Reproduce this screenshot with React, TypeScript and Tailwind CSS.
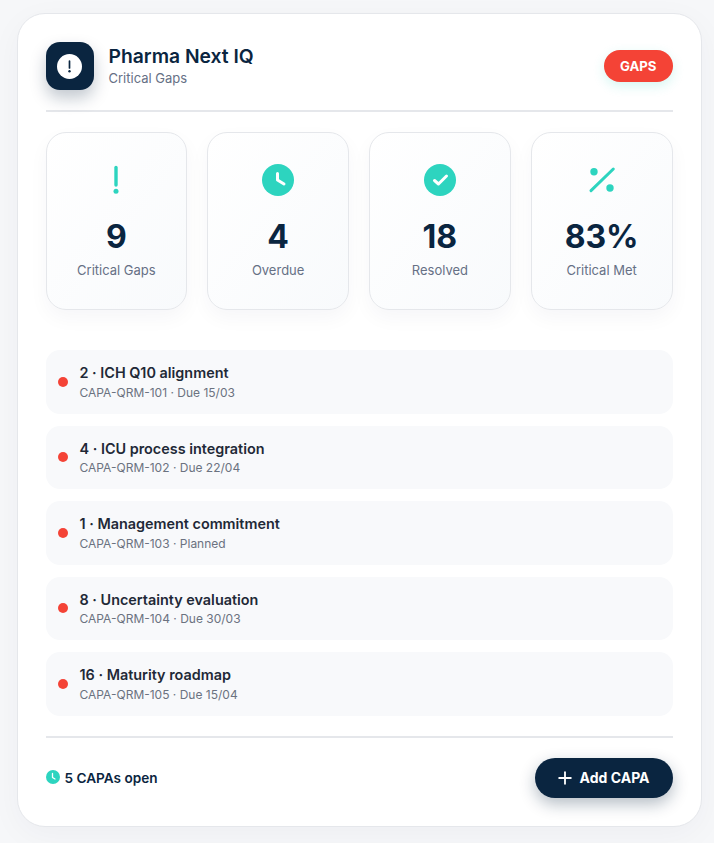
import { Plus } from "lucide-react";

const stats = [
  { icon: "alert", value: "9", label: "Critical Gaps" },
  { icon: "clock", value: "4", label: "Overdue" },
  { icon: "check", value: "18", label: "Resolved" },
  { icon: "percent", value: "83%", label: "Critical Met" },
];

const capas = [
  { title: "2 · ICH Q10 alignment", meta: "CAPA-QRM-101 · Due 15/03" },
  { title: "4 · ICU process integration", meta: "CAPA-QRM-102 · Due 22/04" },
  { title: "1 · Management commitment", meta: "CAPA-QRM-103 · Planned" },
  { title: "8 · Uncertainty evaluation", meta: "CAPA-QRM-104 · Due 30/03" },
  { title: "16 · Maturity roadmap", meta: "CAPA-QRM-105 · Due 15/04" },
];

function StatIcon({ name }: { name: string }) {
  return (
    <svg viewBox="0 0 32 32" className="h-8 w-8" fill="none">
      {name === "alert" && (
        <>
          <path d="M16 3.5V21" stroke="#2dd4bf" strokeWidth="3.4" strokeLinecap="round" />
          <circle cx="16" cy="27.3" r="2.5" fill="#2dd4bf" />
        </>
      )}
      {name === "clock" && (
        <>
          <circle cx="16" cy="16" r="16" fill="#2dd4bf" />
          <path d="M15.5 9.5V16L22 20" stroke="#fff" strokeWidth="3" strokeLinecap="round" strokeLinejoin="round" />
        </>
      )}
      {name === "check" && (
        <>
          <circle cx="16" cy="16" r="16" fill="#2dd4bf" />
          <path d="M10.5 16.5L14.5 20L22.5 12" stroke="#fff" strokeWidth="3" strokeLinecap="round" strokeLinejoin="round" />
        </>
      )}
      {name === "percent" && (
        <>
          <path d="M5 26.7L27.3 5" stroke="#2dd4bf" strokeWidth="3" strokeLinecap="round" />
          <circle cx="8" cy="7.7" r="3.7" fill="#2dd4bf" />
          <circle cx="24" cy="24" r="3.7" fill="#2dd4bf" />
        </>
      )}
    </svg>
  );
}

export default function App() {
  return (
    <div className="min-h-[843px] bg-[#f6f7f9] pl-[16.5px] pt-[13px] font-['Inter',sans-serif]">
      <div className="w-[685px] rounded-[28px] border border-[#e5e7eb] bg-white px-[28px] pt-[28px] pb-[28px] shadow-[0_8px_32px_rgba(10,37,64,0.04)]">
        {/* header */}
        <div className="flex items-center justify-between border-b-2 border-[#e5e7eb] pb-5">
          <div className="flex items-center gap-[15px]">
            <div className="flex h-12 w-12 items-center justify-center rounded-[14px] bg-[#0a2540] shadow-[0_8px_16px_rgba(10,37,64,0.25)]">
              <svg viewBox="0 0 25 25" className="h-[25px] w-[25px]">
                <circle cx="12.5" cy="12.5" r="12.5" fill="#fff" />
                <path d="M12.5 7v7" stroke="#0a2540" strokeWidth="1.7" strokeLinecap="round" />
                <circle cx="12.5" cy="17.3" r="1.2" fill="#0a2540" />
              </svg>
            </div>
            <div className="pb-[1px]">
              <div className="text-[19.3px] leading-[24px] font-semibold text-[#0a2540]">Pharma Next IQ</div>
              <div className="mt-[1px] text-[13px] leading-[18px] text-[#667085]">Critical Gaps</div>
            </div>
          </div>
          <div className="rounded-full bg-[#f44336] px-4 py-[7px] text-[13.2px] leading-[18px] font-bold text-white shadow-[0_4px_12px_rgba(45,212,191,0.2)]">
            GAPS
          </div>
        </div>

        {/* stats */}
        <div className="mt-5 grid grid-cols-4 gap-5">
          {stats.map((s) => (
            <div
              key={s.label}
              className="flex h-[178px] flex-col items-center rounded-[20px] border border-[#e5e7eb] bg-gradient-to-br from-white to-[#f8fafc] pt-[31px] shadow-[0_8px_20px_rgba(10,37,64,0.04)]"
            >
              <StatIcon name={s.icon} />
              <div className="mt-[21px] text-[32px] leading-[40px] font-bold text-[#0a2540]">{s.value}</div>
              <div className="mt-[3px] text-[13px] leading-[20px] text-[#667085]">{s.label}</div>
            </div>
          ))}
        </div>

        {/* capa list */}
        <div className="mt-10 flex flex-col gap-3">
          {capas.map((c) => (
            <div key={c.meta} className="flex h-[63.5px] items-center gap-[12px] rounded-[14px] bg-[#f8f9fb] px-3">
              <div className="h-[10px] w-[10px] rounded-full bg-[#f44336]" />
              <div>
                <div className="text-[14.4px] leading-[21px] font-semibold text-[#1f2937]">{c.title}</div>
                <div className="pt-[0.5px] text-[12px] leading-[18px] text-[#6b7280]">{c.meta}</div>
              </div>
            </div>
          ))}
        </div>

        {/* footer */}
        <div className="mt-[20px] flex items-center justify-between border-t-2 border-[#e5e7eb] pt-5">
          <div className="flex items-center gap-[5px] pt-[2px] text-[13.6px] font-semibold text-[#0a2540]">
            <svg viewBox="0 0 14 14" className="mb-[3px] h-[14px] w-[14px]" fill="none">
              <circle cx="7" cy="7" r="7" fill="#2dd4bf" />
              <path d="M6.5 3.5v4l2.5 1.5" stroke="#fff" strokeWidth="1.3" strokeLinecap="round" strokeLinejoin="round" />
            </svg>
            5 CAPAs open
          </div>
          <button className="flex h-10 items-center gap-[5px] rounded-full bg-[#0a2540] pr-[23px] pl-5 text-[14px] font-bold text-white shadow-[0_6px_16px_rgba(10,37,64,0.3)]">
            <Plus size={20} strokeWidth={2.2} />
            Add CAPA
          </button>
        </div>
      </div>
    </div>
  );
}
